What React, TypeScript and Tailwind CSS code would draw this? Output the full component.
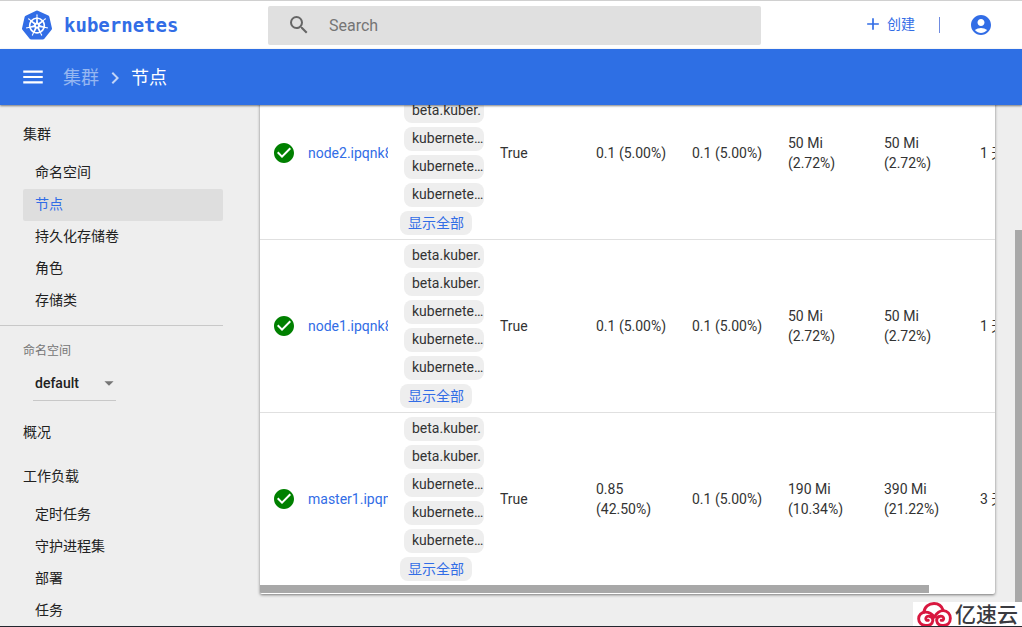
import {
  MdAccountCircle,
  MdAdd,
  MdArrowDropDown,
  MdCheckCircle,
  MdChevronRight,
  MdMenu,
  MdSearch,
} from 'react-icons/md';
import { SiKubernetes } from 'react-icons/si';

interface NodeRow {
  name: string;
  labels: string[];
  ready: string;
  cpuRequests: string;
  cpuLimits: string;
  memoryRequests: string;
  memoryLimits: string;
  age: string;
}

const labels = ['beta.kuber.', 'beta.kuber.', 'kubernete…', 'kubernete…', 'kubernete…'];

const nodes: NodeRow[] = [
  {
    name: 'node2.ipqnk8s',
    labels,
    ready: 'True',
    cpuRequests: '0.1 (5.00%)',
    cpuLimits: '0.1 (5.00%)',
    memoryRequests: '50 Mi (2.72%)',
    memoryLimits: '50 Mi (2.72%)',
    age: '1 天',
  },
  {
    name: 'node1.ipqnk8s',
    labels,
    ready: 'True',
    cpuRequests: '0.1 (5.00%)',
    cpuLimits: '0.1 (5.00%)',
    memoryRequests: '50 Mi (2.72%)',
    memoryLimits: '50 Mi (2.72%)',
    age: '1 天',
  },
  {
    name: 'master1.ipqnk8s',
    labels,
    ready: 'True',
    cpuRequests: '0.85 (42.50%)',
    cpuLimits: '0.1 (5.00%)',
    memoryRequests: '190 Mi (10.34%)',
    memoryLimits: '390 Mi (21.22%)',
    age: '3 天',
  },
];

const clusterItems = ['命名空间', '节点', '持久化存储卷', '角色', '存储类'];
const workloadItems = ['定时任务', '守护进程集', '部署', '任务'];

const TopBar = () => (
  <header className="flex h-[49px] shrink-0 items-center border-t border-[#d0d0d0] bg-white">
    <a href="#" className="flex w-[268px] shrink-0 items-center gap-3 pl-[22px] text-[#326de6]">
      <SiKubernetes className="size-[30px]" />
      <span className="font-['DejaVu_Sans_Mono',monospace] text-[19px] font-bold">kubernetes</span>
    </a>
    <label className="flex h-[39px] flex-1 items-center gap-[18px] rounded-xs bg-[#e0e0e0] pl-[19px]">
      <MdSearch className="size-6 text-[#666]" />
      <input
        type="text"
        aria-label="Search"
        placeholder="Search"
        className="min-w-0 flex-1 bg-transparent pt-0.5 text-base outline-none placeholder:text-[#757575]"
      />
    </label>
    <div className="flex w-[261px] shrink-0 items-center justify-end pr-[29px] text-[#326de6]">
      <button className="flex items-center gap-1 pb-0.5 text-sm">
        <MdAdd className="size-5" />
        创建
      </button>
      <span className="ml-6 h-4 w-px bg-[#6f8be0]" />
      <button aria-label="Account" className="ml-[29px]">
        <MdAccountCircle className="size-6" />
      </button>
    </div>
  </header>
);

const ActionBar = () => (
  <div className="z-10 flex h-14 shrink-0 items-center bg-[#2e6fe4] pl-5 text-lg text-white shadow-[0_1px_2px_rgba(0,0,0,0.5)]">
    <button aria-label="Menu">
      <MdMenu className="size-[26px]" />
    </button>
    <nav className="ml-[17px] flex items-center pt-0.5">
      <a href="#" className="text-white/50">集群</a>
      <MdChevronRight className="mx-1 size-6 text-white/70" />
      <span>节点</span>
    </nav>
  </div>
);

const NavItem = ({ label, active = false }: { label: string; active?: boolean }) => (
  <a
    href="#"
    className={`flex h-8 items-center rounded-xs pb-0.5 pl-3 ${active ? 'bg-[#dedede] text-[#326de6]' : ''}`}
  >
    {label}
  </a>
);

const NavHeading = ({ label }: { label: string }) => (
  <a href="#" className="flex h-11 items-center pb-0.5">
    {label}
  </a>
);

const Sidebar = () => (
  <aside className="w-[223px] shrink-0 pt-2 text-sm text-[#212121]">
    <nav className="pl-[23px]">
      <NavHeading label="集群" />
      {clusterItems.map((item) => (
        <NavItem key={item} label={item} active={item === '节点'} />
      ))}
    </nav>
    <hr className="mt-2 border-[#c8c8c8]" />
    <div className="pt-[17px] pl-[23px]">
      <label htmlFor="namespace" className="block text-xs text-[#757575]">
        命名空间
      </label>
      <div className="relative mt-[7px] ml-[10px] w-[83px] border-b border-[#c8c8c8]">
        <select id="namespace" className="block h-[34px] w-full appearance-none pl-[2px] font-medium outline-none">
          <option>default</option>
        </select>
        <MdArrowDropDown className="pointer-events-none absolute top-1.5 -right-1 size-[22px] text-[#757575]" />
      </div>
    </div>
    <nav className="mt-[10px] pl-[23px]">
      <NavHeading label="概况" />
      <NavHeading label="工作负载" />
      {workloadItems.map((item) => (
        <NavItem key={item} label={item} />
      ))}
    </nav>
  </aside>
);

const NodeTable = () => (
  <table className="w-[816px] table-fixed text-left text-sm text-[#333]">
    <colgroup>
      <col className="w-12" />
      <col span={8} className="w-24" />
    </colgroup>
    <tbody>
      {nodes.map((node) => (
        <tr key={node.name} className="border-b border-[#e0e0e0] last:border-b-0">
          <td className="pl-3">
            <MdCheckCircle className="size-6 text-[#008000]" />
          </td>
          <td className="pr-4">
            <a href="#" className="block overflow-hidden whitespace-nowrap text-[#326de6]">
              {node.name}
            </a>
          </td>
          <td className="py-1 pr-4">
            <ul className="flex flex-col gap-1">
              {node.labels.map((label, i) => (
                <li key={i} className="h-6 overflow-hidden rounded-lg bg-[#eee] pl-2 leading-[22px] whitespace-nowrap">
                  {label}
                </li>
              ))}
            </ul>
            <button className="mt-1 -ml-1 block h-6 rounded-lg bg-[#eee] px-2 leading-[22px] text-[#326de6]">
              显示全部
            </button>
          </td>
          <td className="pr-4">{node.ready}</td>
          <td className="pr-4">{node.cpuRequests}</td>
          <td className="pr-4">{node.cpuLimits}</td>
          <td className="pr-4">{node.memoryRequests}</td>
          <td className="pr-4">{node.memoryLimits}</td>
          <td className="whitespace-nowrap">{node.age}</td>
        </tr>
      ))}
    </tbody>
  </table>
);

const Watermark = () => (
  <div className="absolute right-0 -bottom-px z-20 flex h-[25px] w-[109px] items-center gap-[3px] bg-white pl-1">
    <svg viewBox="0 0 36 26" className="h-[25px] w-[35px] shrink-0" fill="none" stroke="#d8173f" strokeWidth="3" strokeLinecap="round">
      <path d="M7 10.500C7.500 5 12 1.500 17.500 1.500C22 1.500 25.500 4 27 8.500" />
      <path d="M11.500 19C10 19.500 8.800 18.500 9 17C9.300 15.200 11 14.500 12.500 14.800C15 15.200 16.500 17 16.200 19.500C15.800 22.500 13.500 24.300 10.500 24.300H8.500C4.500 24.300 1.500 21.300 1.500 17.500C1.500 13.500 4.500 10.500 8.500 10.500C12.500 10.500 15.200 12 17.800 15.500" />
      <path d="M25 19C26.500 19.500 27.700 18.500 27.500 17C27.200 15.200 25.500 14.500 24 14.800C21.500 15.200 20 17 20.300 19.500C20.700 22.500 23 24.300 26 24.300H27.500C31.500 24.300 34.500 21.300 34.500 17C34.500 12.500 31.500 9 27 9C22.500 9 20 12 17.800 15.500" />
    </svg>
    <span className="text-[21px] leading-6 font-medium whitespace-nowrap text-[#3a3a3f]">亿速云</span>
  </div>
);

export default function App() {
  return (
    <div className="relative flex h-screen flex-col overflow-hidden border-b border-[#23262e] bg-[#eee] font-[Roboto,'Noto_Sans_CJK_SC',sans-serif]">
      <TopBar />
      <ActionBar />
      <div className="flex min-h-0 flex-1 overflow-hidden">
        <Sidebar />
        {/* Content is scrolled to its end, so the last rows sit against the bottom */}
        <main className="flex min-w-0 flex-1 flex-col justify-end pr-5 pb-8 pl-[37px]">
          <section className="shrink-0 overflow-hidden rounded-xs bg-white pb-px shadow-[0_1px_3px_rgba(0,0,0,0.5)]">
            <NodeTable />
            <div className="h-2 w-[91%] bg-[#a8a8a8]" />
          </section>
        </main>
        <div className="flex w-[7px] shrink-0 flex-col justify-end">
          <div className="h-[76%] bg-[#a8a8a8]" />
        </div>
      </div>
      <Watermark />
    </div>
  );
}
